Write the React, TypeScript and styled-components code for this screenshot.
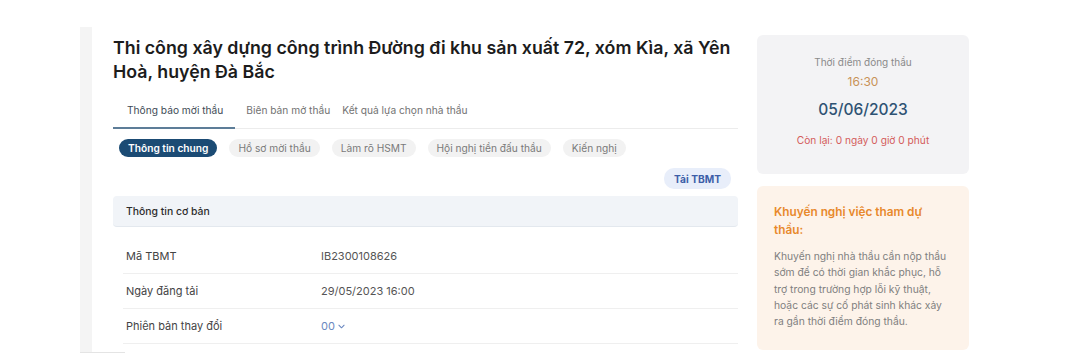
import styled, { createGlobalStyle } from 'styled-components'

const GlobalStyle = createGlobalStyle`
  html, body {
    margin: 0;
    padding: 0;
    background: #ffffff;
    font-family: Inter, 'Noto Sans', sans-serif;
    -webkit-font-smoothing: antialiased;
  }
`

const Page = styled.div`
  display: flex;
  align-items: flex-start;
  width: 1079px;
  height: 363px;
  padding-left: 80px;
  box-sizing: border-box;
  overflow: hidden;
`

const Gutter = styled.div`
  position: relative;
  width: 12px;
  height: 325px;
  margin-top: 27px;
  background: #f4f4f4;
  border-bottom: 1px solid #e4e4e4;
  &::after {
    content: '';
    position: absolute;
    left: 0;
    bottom: -1px;
    width: 45px;
    height: 1px;
    background: #e4e4e4;
  }
`

const Main = styled.div`
  width: 625px;
  margin-left: 21px;
  padding-top: 36px;
  display: flex;
  flex-direction: column;
`

const Title = styled.h1`
  margin: 0;
  font-size: 17.8px;
  line-height: 24px;
  font-weight: 600;
  color: #1c1c1c;
`

const Tabs = styled.div`
  display: flex;
  margin-top: 14px;
  border-bottom: 1px solid #ececec;
`

const Tab = styled.div<{ $active?: boolean }>`
  padding: ${(p) => (p.$active ? '5px 12px 10px 14px' : '5px 6px 10px')};
  margin-right: ${(p) => (p.$active ? 5 : 0)}px;
  font-size: 10.2px;
  line-height: 14px;
  color: ${(p) => (p.$active ? '#3e4a56' : '#727272')};
  border-bottom: 2px solid ${(p) => (p.$active ? '#5d7d98' : 'transparent')};
  margin-bottom: -1px;
`

const Pills = styled.div`
  display: flex;
  gap: 12px;
  margin-top: 10px;
  padding-left: 6px;
`

const Pill = styled.div<{ $active?: boolean }>`
  height: 18px;
  padding: 0 9px;
  border-radius: 9px;
  display: flex;
  align-items: center;
  font-size: 10.2px;
  font-weight: ${(p) => (p.$active ? 600 : 400)};
  color: ${(p) => (p.$active ? '#ffffff' : '#7a7a7a')};
  background: ${(p) => (p.$active ? '#1b4b74' : '#f2f2f2')};
`

const Actions = styled.div`
  display: flex;
  justify-content: flex-end;
  margin-top: 11px;
  padding-right: 7px;
`

const DownloadButton = styled.button`
  height: 21px;
  padding: 0 10px;
  border: none;
  border-radius: 10px;
  background: #e8eefa;
  color: #3d5ea8;
  font-family: inherit;
  font-size: 10.2px;
  font-weight: 700;
`

const SectionHeader = styled.div`
  margin-top: 7px;
  height: 31px;
  display: flex;
  align-items: center;
  padding-left: 13px;
  background: #f1f4f8;
  border-radius: 4px;
  border-bottom: 1px solid #e3e8ee;
  box-sizing: border-box;
  font-size: 10.4px;
  font-weight: 500;
  color: #2c2c2c;
`

const Rows = styled.div`
  margin: 12px 0 0 10px;
`

const Row = styled.div`
  display: flex;
  align-items: center;
  height: 34px;
  border-bottom: 1px solid #efefef;
  font-size: 11px;
`

const Label = styled.div`
  width: 198px;
  padding-left: 3px;
  box-sizing: border-box;
  color: #444;
`

const Value = styled.div<{ $link?: boolean }>`
  display: flex;
  align-items: center;
  gap: 3px;
  color: ${(p) => (p.$link ? '#6a88c0' : '#555')};
`

const Side = styled.div`
  width: 212px;
  margin-left: 19px;
  margin-top: 35px;
  display: flex;
  flex-direction: column;
  gap: 12px;
`

const DeadlineCard = styled.div`
  height: 139px;
  border-radius: 6px;
  background: #f3f3f5;
  display: flex;
  flex-direction: column;
  align-items: center;
  padding-top: 20px;
  box-sizing: border-box;
`

const DeadlineLabel = styled.div`
  font-size: 10px;
  line-height: 14px;
  color: #8a8a8a;
`

const DeadlineTime = styled.div`
  margin-top: 5px;
  font-size: 12px;
  line-height: 16px;
  color: #c89258;
`

const DeadlineDate = styled.div`
  margin-top: 9px;
  font-size: 15.5px;
  line-height: 22px;
  font-weight: 500;
  color: #2e5273;
`

const Remaining = styled.div`
  margin-top: 12px;
  font-size: 10.2px;
  line-height: 14px;
  color: #d35b5b;
`

const AdviceCard = styled.div`
  height: 164px;
  border-radius: 6px;
  background: #fdf3ea;
  padding: 17px 17px 0;
  box-sizing: border-box;
`

const AdviceTitle = styled.div`
  font-size: 11.8px;
  line-height: 18px;
  font-weight: 600;
  color: #e8892c;
`

const AdviceText = styled.p`
  margin: 9px 0 0;
  font-size: 10.3px;
  line-height: 16.3px;
  color: #7f7f7f;
  white-space: nowrap;
`

function Chevron() {
  return (
    <svg width="7" height="5" viewBox="0 0 8 5" fill="none">
      <path d="M1 1l3 3 3-3" stroke="#6a88c0" strokeWidth="1.2" strokeLinecap="round" strokeLinejoin="round" />
    </svg>
  )
}

const details = [
  { label: 'Mã TBMT', value: 'IB2300108626' },
  { label: 'Ngày đăng tải', value: '29/05/2023 16:00' },
]

const adviceLines = [
  'Khuyến nghị nhà thầu cần nộp thầu',
  'sớm để có thời gian khắc phục, hỗ',
  'trợ trong trường hợp lỗi kỹ thuật,',
  'hoặc các sự cố phát sinh khác xảy',
  'ra gần thời điểm đóng thầu.',
]

export default function App() {
  return (
    <Page>
      <GlobalStyle />
      <Gutter />
      <Main>
        <Title>
          Thi công xây dựng công trình Đường đi khu sản xuất 72, xóm Kìa, xã Yên Hoà, huyện Đà Bắc
        </Title>
        <Tabs>
          <Tab $active>Thông báo mời thầu</Tab>
          <Tab>Biên bản mở thầu</Tab>
          <Tab>Kết quả lựa chọn nhà thầu</Tab>
        </Tabs>
        <Pills>
          <Pill $active>Thông tin chung</Pill>
          <Pill>Hồ sơ mời thầu</Pill>
          <Pill>Làm rõ HSMT</Pill>
          <Pill>Hội nghị tiền đấu thầu</Pill>
          <Pill>Kiến nghị</Pill>
        </Pills>
        <Actions>
          <DownloadButton type="button">Tải TBMT</DownloadButton>
        </Actions>
        <SectionHeader>Thông tin cơ bản</SectionHeader>
        <Rows>
          {details.map((d) => (
            <Row key={d.label}>
              <Label>{d.label}</Label>
              <Value>{d.value}</Value>
            </Row>
          ))}
          <Row>
            <Label>Phiên bản thay đổi</Label>
            <Value $link>
              00 <Chevron />
            </Value>
          </Row>
        </Rows>
      </Main>
      <Side>
        <DeadlineCard>
          <DeadlineLabel>Thời điểm đóng thầu</DeadlineLabel>
          <DeadlineTime>16:30</DeadlineTime>
          <DeadlineDate>05/06/2023</DeadlineDate>
          <Remaining>Còn lại: 0 ngày 0 giờ 0 phút</Remaining>
        </DeadlineCard>
        <AdviceCard>
          <AdviceTitle>Khuyến nghị việc tham dự thầu:</AdviceTitle>
          <AdviceText>
            {adviceLines.map((line, i) => (
              <span key={i}>
                {line}
                {i < adviceLines.length - 1 && <br />}
              </span>
            ))}
          </AdviceText>
        </AdviceCard>
      </Side>
    </Page>
  )
}
